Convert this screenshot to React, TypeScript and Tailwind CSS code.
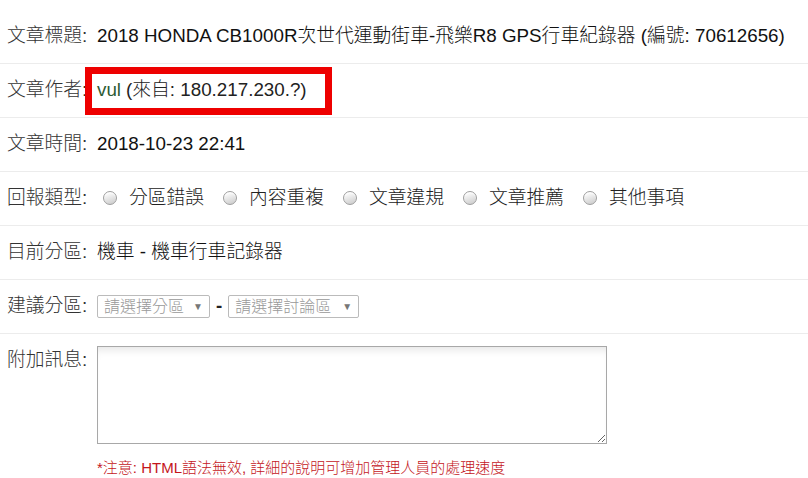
import React from "react";

const font = { fontFamily: '"Liberation Sans", "Noto Sans CJK TC", sans-serif' };

function Row({ label, children }: { label: string; children: React.ReactNode }) {
  return (
    <div className="flex items-center h-[54px] border-b border-[#ececec]">
      <div className="w-[97px] shrink-0 pl-[7px] text-[#333]">{label}</div>
      <div className="flex items-center text-[#111]">{children}</div>
    </div>
  );
}

function Radio({ text }: { text: string }) {
  return (
    <label className="flex items-center w-[120px] shrink-0">
      <span className="ml-[6px] mr-[12px] h-[14px] w-[14px] shrink-0 rounded-full border border-[#9e9e9e] bg-[linear-gradient(160deg,#ffffff_10%,#e6e6e6_50%,#c9c9c9)] shadow-[inset_0_1px_1px_rgba(255,255,255,0.9)]" />
      <span className="text-[#222]">{text}</span>
    </label>
  );
}

function Select({ text, width }: { text: string; width: string }) {
  return (
    <div className={`flex items-center justify-between h-[23px] border border-[#bbb] rounded-[2px] pl-[6px] pr-[6px] text-[16px] text-[#999] ${width}`}>
      <span>{text}</span>
      <span className="text-[10px] text-[#777]">▼</span>
    </div>
  );
}

export default function App() {
  return (
    <div className="w-[808px] h-[478px] bg-white overflow-hidden pt-[10px] text-[18.8px] leading-none font-light" style={font}>
      <Row label="文章標題:">
        2018 HONDA CB1000R次世代運動街車-飛樂R8 GPS行車紀錄器 (編號: 70612656)
      </Row>
      <Row label="文章作者:">
        <div className="-ml-[12px] flex items-center h-[48px] w-[247px] border-[7px] border-[#ee0000] pl-[5px]">
          <span className="text-[#2e5a34]">vul</span>
          <span className="ml-[5px] text-[#222]">(來自: 180.217.230.?)</span>
        </div>
      </Row>
      <Row label="文章時間:">2018-10-23 22:41</Row>
      <Row label="回報類型:">
        <Radio text="分區錯誤" />
        <Radio text="內容重複" />
        <Radio text="文章違規" />
        <Radio text="文章推薦" />
        <Radio text="其他事項" />
      </Row>
      <Row label="目前分區:">機車 - 機車行車記錄器</Row>
      <Row label="建議分區:">
        <Select text="請選擇分區" width="w-[113px]" />
        <span className="mx-[6px] font-bold text-[#222]">-</span>
        <Select text="請選擇討論區" width="w-[131px]" />
      </Row>
      <div className="flex pt-[15px]">
        <div className="w-[97px] shrink-0 pl-[7px] pt-[2px] text-[#333]">附加訊息:</div>
        <div className="flex flex-col">
          <textarea className="mt-[-3px] h-[98px] w-[510px] border border-[#a8a8a8] shadow-[inset_0_8px_10px_-6px_rgba(0,0,0,0.12)] resize" />
          <div className="mt-[16px] text-[15px] text-[#c4161c]">
            *注意: HTML語法無效, 詳細的說明可增加管理人員的處理速度
          </div>
        </div>
      </div>
    </div>
  );
}
